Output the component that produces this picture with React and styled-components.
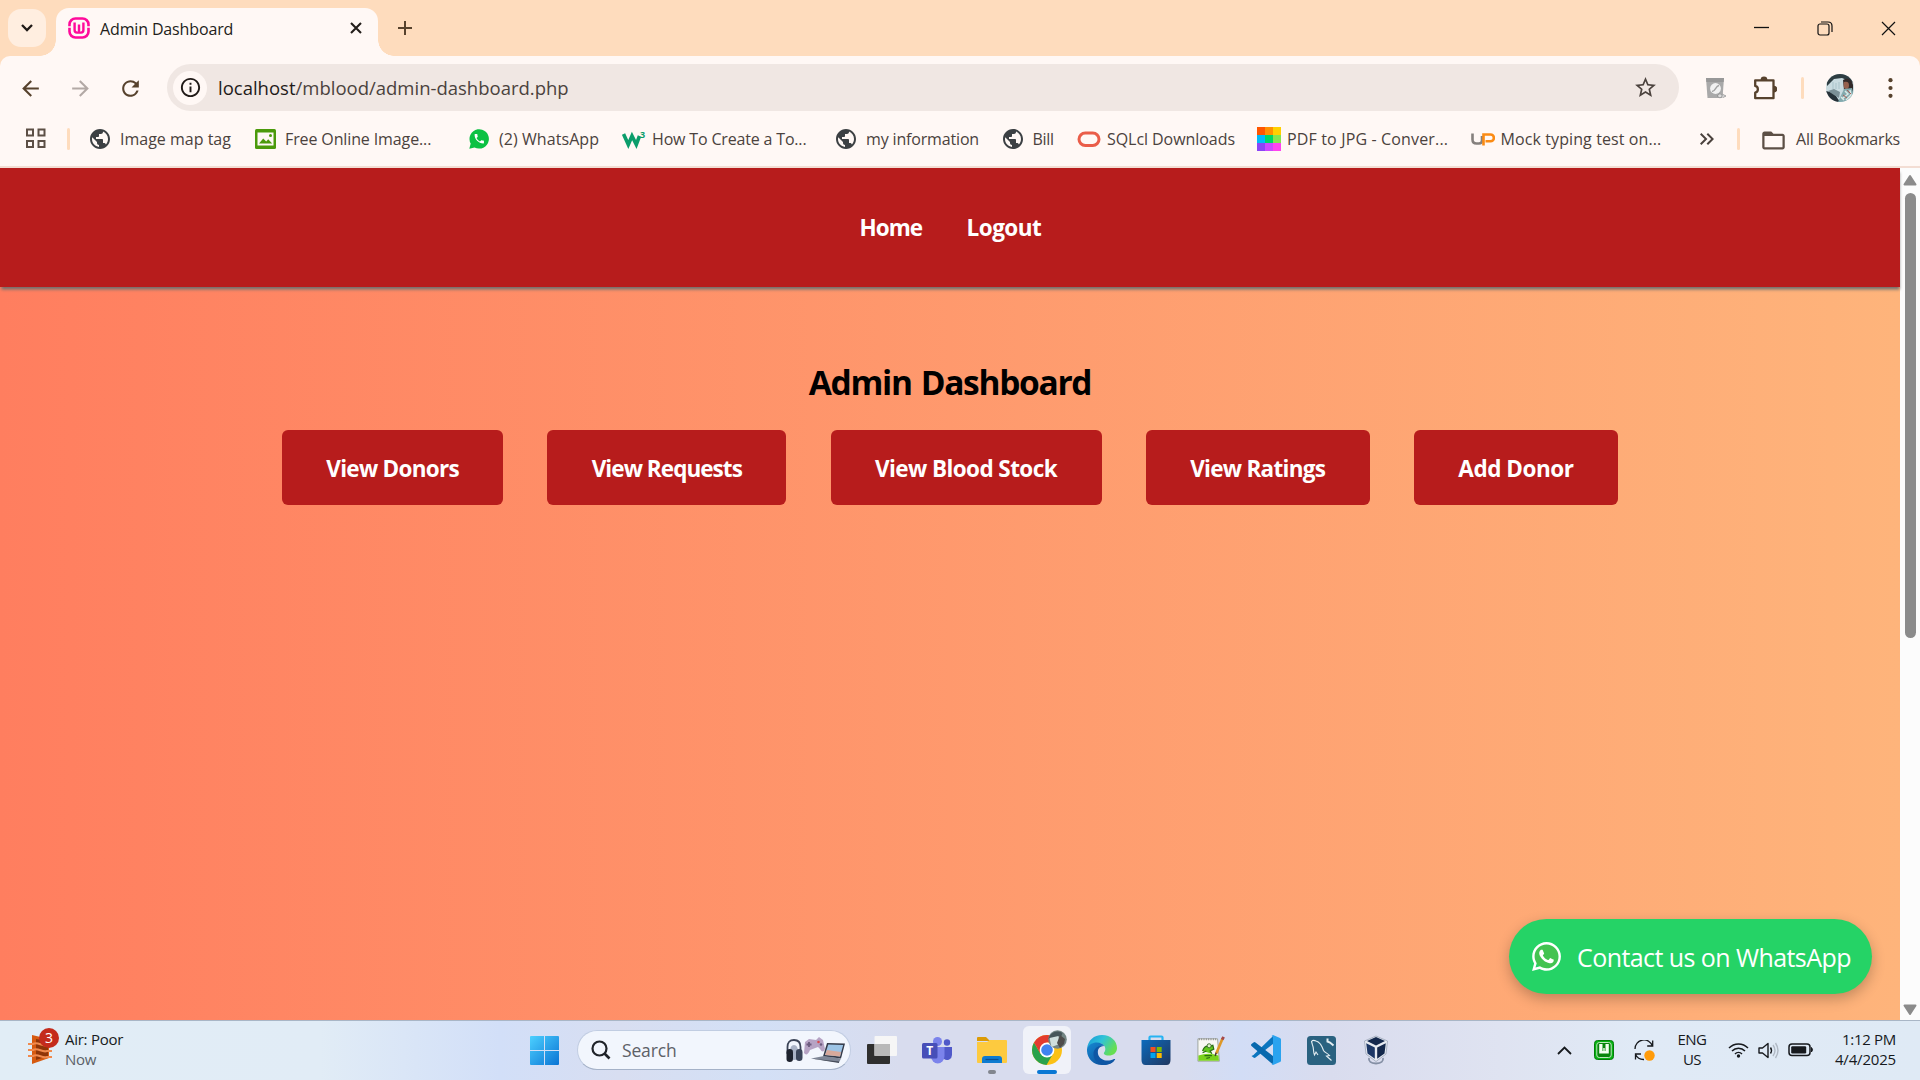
import React from "react";
import styled, { createGlobalStyle, css } from "styled-components";
import {
  MdPublic, MdOutlineInfo, MdArrowBack, MdArrowForward, MdRefresh,
  MdStarOutline, MdFolderOpen, MdKeyboardDoubleArrowRight, MdPhone,
} from "react-icons/md";
import { FaWhatsapp } from "react-icons/fa";

const Global = createGlobalStyle`
  * { box-sizing: border-box; }
  html, body { margin: 0; padding: 0; overflow: hidden; }
  body { font-family: "Open Sans", "Noto Sans", sans-serif; }
  svg { display: block; flex: none; }
`;

const Screen = styled.div`
  width: 1920px;
  height: 1080px;
  display: flex;
  flex-direction: column;
  overflow: hidden;
`;

const Label = styled.span`
  font-size: ${(p) => p.$size || 16}px;
  line-height: 20px;
  letter-spacing: ${(p) => p.$ls || 0}px;
  color: ${(p) => p.$color || "#4b423d"};
  white-space: nowrap;
`;

/* ---------- tab strip ---------- */

const TabStrip = styled.header`
  height: 56px;
  flex: none;
  display: flex;
  background: #fedcbd;
  padding-left: 8px;
`;

const TabSearch = styled.div`
  width: 38px;
  height: 38px;
  margin-top: 9px;
  border-radius: 13px;
  background: #ffeee0;
  display: grid;
  place-items: center;
`;

const flare = css`
  content: "";
  position: absolute;
  bottom: 0;
  width: 16px;
  height: 16px;
`;

const Tab = styled.div`
  position: relative;
  width: 322px;
  height: 48px;
  margin: 8px 0 0 10px;
  padding: 0 16px 9px 12px;
  border-radius: 13px 13px 0 0;
  background: #fff8f5;
  display: flex;
  align-items: center;
  &::before { ${flare} left: -16px; background: radial-gradient(circle at 0 0, transparent 15.5px, #fff8f5 16px); }
  &::after { ${flare} right: -16px; background: radial-gradient(circle at 100% 0, transparent 15.5px, #fff8f5 16px); }
`;

const TabTitle = styled(Label)`
  flex: 1;
  margin: 3px 0 0 10px;
`;

const NewTab = styled.div`
  width: 20px;
  margin: 20px 0 0 19px;
`;

const WindowButtons = styled.div`
  margin-left: auto;
  padding-right: 24px;
  height: 56px;
  display: flex;
  align-items: center;
  gap: 48px;
`;

/* ---------- toolbar ---------- */

const ChromeBack = styled.div`
  background: #fedcbd;
  flex: none;
`;

const Chrome = styled.div`
  height: 112px;
  background: #fff8f5;
  border-radius: 10px 10px 0 0;
  border-bottom: 2px solid #f3ddd3;
`;

const Toolbar = styled.div`
  height: 63px;
  display: flex;
  align-items: center;
  padding: 0 27px 0 18px;
`;

const NavButton = styled.div`
  width: 25px;
  margin-right: 25px;
  padding-top: 1px;
  color: ${(p) => (p.$dim ? "#b3a9a5" : "#57422d")};
`;

const Omnibox = styled.div`
  width: 1512px;
  height: 47px;
  margin-left: -1px;
  border-radius: 24px;
  background: #f0e7e3;
  display: flex;
  align-items: center;
  padding: 0 21px 0 6px;
`;

const InfoDisc = styled.div`
  width: 34px;
  height: 34px;
  border-radius: 50%;
  background: #fff8f5;
  display: grid;
  place-items: center;
  color: #201a17;
`;

const Url = styled(Label)`
  flex: 1;
  margin-left: 11px;
  b { font-weight: 400; color: #1f1b19; }
`;

const Divider = styled.div`
  width: 3px;
  height: 22px;
  border-radius: 2px;
  background: #fedcbd;
`;

const ToolbarEnd = styled.div`
  display: grid;
  grid-template-columns: 48px 48px 25px 62px 5px;
  align-items: center;
  margin-left: auto;
`;

/* ---------- bookmarks ---------- */

const Bookmarks = styled.div`
  height: 43px;
  display: grid;
  grid-template-columns: 40.5px 23.5px 165px 214px 153px 214px 166.5px 74.5px 180px 213.5px 224px 42.5px 23px 1fr;
  align-items: center;
  padding: 0 0 4px 26px;
`;

const Bookmark = styled.div`
  display: flex;
  align-items: center;
  gap: ${(p) => p.$gap || 6}px;
`;

const Glyph = styled.span`
  width: 24px;
  height: 24px;
  flex: none;
  display: grid;
  place-items: center;
  margin: 0 ${(p) => p.$shift || 0}px 0 -${(p) => p.$shift || 0}px;
  color: ${(p) => p.$color || "#3c4043"};
`;

/* ---------- page ---------- */

const Viewport = styled.div`
  flex: 1;
  display: flex;
  min-height: 0;
`;

const Page = styled.main`
  position: relative;
  width: 1900px;
  background: linear-gradient(to right, #ff7e5f, #feb47b);
`;

const Nav = styled.nav`
  height: 119px;
  background: #b71c1c;
  box-shadow: 0 3px 3px -0.5px #6f6f6f;
  display: flex;
  justify-content: center;
  align-items: center;
  gap: 45px;
`;

const NavLink = styled.a`
  width: ${(p) => p.$w}px;
  font-size: 22.5px;
  font-weight: 700;
  line-height: 30px;
  letter-spacing: ${(p) => p.$ls}px;
  color: #fff;
  white-space: nowrap;
`;

const Title = styled.h1`
  margin: 72px 0 24px;
  height: 47px;
  font-size: 33.5px;
  line-height: 47px;
  font-weight: 700;
  letter-spacing: -1.3px;
  word-spacing: 1.500px;
  text-align: center;
  color: #000;
`;

const Actions = styled.div`
  display: flex;
  justify-content: center;
  gap: 44.2px;
`;

const Action = styled.a`
  width: ${(p) => p.$w}px;
  height: 75px;
  border-radius: 6px;
  background: #b71c1c;
  color: #fff;
  font-size: 22.5px;
  font-weight: 700;
  line-height: 78px;
  letter-spacing: ${(p) => p.$ls}px;
  text-align: center;
  white-space: nowrap;
`;

const Contact = styled.a`
  position: absolute;
  right: 28px;
  bottom: 26px;
  width: 363px;
  height: 75px;
  border-radius: 38px;
  background: #25d366;
  box-shadow: 0 5px 14px rgba(0, 0, 0, 0.24);
  display: flex;
  align-items: center;
  padding-left: 21px;
  gap: 14px;
  color: #fff;
`;

const ContactText = styled.span`
  font-size: 25px;
  line-height: 34px;
  letter-spacing: -0.57px;
  white-space: nowrap;
`;

const ScrollTrack = styled.div`
  width: 20px;
  background: #fcfcfc;
  display: flex;
  flex-direction: column;
  align-items: center;
  padding: 6px 0 4px;
`;

const Thumb = styled.div`
  width: 11px;
  height: 445px;
  margin: 7px 0 auto;
  border-radius: 6px;
  background: #8b8b8b;
`;

/* ---------- taskbar ---------- */

const Taskbar = styled.footer`
  height: 60px;
  flex: none;
  display: flex;
  align-items: center;
  padding-bottom: 1px;
  border-top: 1px solid #a9b6c6;
  background: linear-gradient(to right, #e1edf6 0, #e1ecf6 320px, #d2dff8 500px, #d8def1 620px, #d3e0f6 760px,
    #d8dcee 900px, #d8dcee 1180px, #d2ddf6 1240px, #d9dcee 1330px, #dfe3f1 1500px, #e0eaf6 1640px, #dfeaf5 1920px);
`;

const Weather = styled.div`
  position: relative;
  width: 502px;
  height: 58px;
  display: flex;
  padding: 8px 0 0 65px;
`;

const WeatherArt = styled.div`
  position: absolute;
  left: 27px;
  top: 7px;
`;

const Stack = styled.div`
  display: flex;
  flex-direction: column;
  align-items: ${(p) => p.$align || "flex-start"};
  width: ${(p) => p.$w || "auto"};
  padding-bottom: 2px;
`;

const SearchBox = styled.div`
  width: 274px;
  height: 40px;
  margin: 0 7px 0 18px;
  border-radius: 20px;
  border: 1px solid #c1cde2;
  border-bottom-color: #a5b2c8;
  background: #f2f6fd;
  display: flex;
  align-items: center;
  padding: 0 4px 0 13px;
`;

const SearchText = styled(Label)`
  flex: 1;
  margin: -1px 0 0 11px;
`;

const Apps = styled.div`
  display: flex;
  align-items: center;
  gap: 6.9px;
`;

const AppTile = styled.div`
  position: relative;
  width: 48px;
  height: 48px;
  border-radius: 6px;
  display: grid;
  place-items: center;
  background: ${(p) => (p.$active ? "rgba(255,255,255,.62)" : "transparent")};
`;

const Running = styled.i`
  position: absolute;
  left: 50%;
  bottom: 0;
  width: ${(p) => p.$w}px;
  height: 4px;
  border-radius: 2px;
  transform: translateX(-50%);
  background: ${(p) => p.$color};
`;

const Tray = styled.div`
  margin-left: auto;
  display: flex;
  align-items: center;
  padding-right: 24px;
`;

const TraySlot = styled.div`
  width: ${(p) => p.$w}px;
  display: flex;
  justify-content: ${(p) => p.$justify || "flex-start"};
`;

/* ---------- drawings ---------- */

const WampMark = () => (
  <svg width="22" height="22" viewBox="0 0 22 22">
    <rect x="1.5" y="1.5" width="19" height="19" rx="6" fill="#fff8f5" stroke="#ff0a9b" strokeWidth="2.6" />
    <path d="M6.600 5.500v7.500q0 2.600 2.400 2.600h4q2.400 0 2.400-2.600V5.500M11 7.500v8" fill="none" stroke="#ff0a9b" strokeWidth="2.400" />
    <path d="M0 10h3.200M18.800 10H22" stroke="#fff8f5" strokeWidth="1.500" />
  </svg>
);

const Cross = ({ size, color, w }) => (
  <svg width={size} height={size} viewBox={`0 0 ${size} ${size}`}>
    <path d={`M1 1L${size - 1} ${size - 1}M${size - 1} 1L1 ${size - 1}`} stroke={color} strokeWidth={w} />
  </svg>
);

const ReviewExtension = () => (
  <svg width="22" height="24" viewBox="0 0 22 24">
    <path d="M1 2h18l-1.5 20h-15z" fill="#a9a9a9" />
    <path d="M1 2h18l-.3 4H1.300z" fill="#989898" />
    <circle cx="10.500" cy="12.500" r="5.400" fill="#f1f1f1" />
    <path d="M7 15.500c3.500 0 3.500-5.500 7-6" stroke="#a2a2a2" strokeWidth="1.400" fill="none" />
    <path d="M12 20l3-2.500 2.500 2.500-2.500 2zM17 18l4 2-3 1.500" fill="#ddd" stroke="#888" strokeWidth=".7" />
  </svg>
);

const Puzzle = () => (
  <svg width="24" height="24" viewBox="0 0 24 24">
    <path d="M2.200 4.300h18.300v17.900H2.200v-5.500a3.500 3.500 0 0 0 0-6.800z" fill="none" stroke="#57422d" strokeWidth="2.300" strokeLinejoin="round" />
    <path d="M7.600 4a3.400 3.400 0 0 1 6.800 0zM21 9.800a3.300 3.300 0 0 1 0 6.600z" fill="#57422d" />
  </svg>
);

const Avatar = () => (
  <svg width="28" height="28" viewBox="0 0 28 28">
    <clipPath id="avatarClip"><circle cx="14" cy="14" r="14" /></clipPath>
    <g clipPath="url(#avatarClip)">
      <rect width="28" height="28" fill="#c9dbe0" />
      <path d="M0 0h28v9L16 4 8 5 1 12z" fill="#2e3d42" />
      <path d="M0 17l8 2 6 9H0z" fill="#273238" />
      <path d="M2 17l6-2 6 3-1 6-5-3z" fill="#7c9096" />
      <path d="M7 8v7M10 9v6M13 8v7" stroke="#a9c3ca" strokeWidth="1" />
      <path d="M17 6c5-3 9 0 10 5v7l-9-2z" fill="#322a29" />
      <path d="M18 8c3-1 5 0 5 3s-1 4-3 4-3-3-2-7z" fill="#95604d" />
      <path d="M18 15l8-1 2 8-6 6H12z" fill="#83aaae" />
      <path d="M19 17l3 3-5 4M24 16l1 5-5 5M15 23l3 3" stroke="#dbe9e6" strokeWidth="1.500" fill="none" />
      <path d="M21 16l4 4M17 21l4 3" stroke="#a75f57" strokeWidth="1" />
    </g>
  </svg>
);

const Kebab = () => (
  <svg width="5" height="20" viewBox="0 0 5 20">
    {[2.2, 10, 17.8].map((y) => <circle key={y} cx="2.500" cy={y} r="2.100" fill="#57422d" />)}
  </svg>
);

const AppsGrid = () => (
  <svg width="21" height="21" viewBox="0 0 21 21" fill="none" stroke="#5c4f45" strokeWidth="2">
    <rect x="1" y="1.500" width="6" height="6" /><rect x="12.500" y="1.500" width="6" height="6" />
    <rect x="1" y="13" width="6" height="6" /><rect x="12.500" y="13" width="6" height="6" />
  </svg>
);

const PhotoMark = () => (
  <svg width="21" height="20" viewBox="0 0 21 20">
    <rect width="21" height="20" rx="1.500" fill="#4b9a0b" />
    <rect x="2.500" y="3.500" width="16" height="13" fill="#fff8f5" />
    <path d="M4 14.500l4.200-5 3 3 2-2.200 4 4.200z" fill="#4b9a0b" /><circle cx="15.500" cy="6.500" r="1.500" fill="#4b9a0b" />
  </svg>
);

const GreenPhone = () => (
  <svg width="20" height="20" viewBox="0 0 20 20">
    <path d="M.3 19.800l1.400-5.200A9.700 9.700 0 1 1 5.500 18.400z" fill="#0bc143" />
    <svg x="4" y="3.500" width="12.500" height="12.500" viewBox="0 0 24 24"><MdPhone size={24} color="#fff" /></svg>
  </svg>
);

const Schools = () => (
  <svg width="24" height="24" viewBox="0 -3 24 24">
    <path d="M1.500 4l4.800 10.500L10 6l4.300 8.500L17.500 6" fill="none" stroke="#0b9d6b" strokeWidth="3.600" />
    <text x="18" y="7.500" fontSize="9" fontWeight="700" fill="#0b9d6b" fontFamily="Open Sans">3</text>
  </svg>
);

const Oracle = () => (
  <svg width="24" height="18" viewBox="0 0 24 18">
    <rect x="2" y="3" width="20" height="12.500" rx="6.250" fill="none" stroke="#ea5d49" strokeWidth="3" />
  </svg>
);

const ColourTiles = () => {
  const tiles = ["#ff5500", "#ff9000", "#ffd000", "#00baf8", "#00d564", "#84e550", "#8b45f6", "#cb48ff", "#ff43ef"];
  return (
    <svg width="24" height="24" viewBox="0 0 24 24">
      {tiles.map((c, i) => <rect key={c} x={(i % 3) * 8} y={Math.floor(i / 3) * 8} width="8" height="8" fill={c} />)}
    </svg>
  );
};

const UpMark = () => (
  <svg width="24" height="16" viewBox="0 0 24 16" fill="none" strokeWidth="2.600">
    <path d="M1.500 2.500v6q0 4 4 4h2.500q3 0 3-3V5" stroke="#85807d" />
    <path d="M12.500 14.500V3.500h7a3.300 3.300 0 0 1 0 6.800h-5" stroke="#fb8b13" />
  </svg>
);

const Arrow = ({ down }) => (
  <svg width="14" height="12" viewBox="0 0 14 12">
    <path d={down ? "M1.500 1.500h11L7 10z" : "M1.500 10.500h11L7 2z"} fill="#8b8b8b" stroke="#8b8b8b" strokeWidth="2" strokeLinejoin="round" />
  </svg>
);

const LungArt = () => (
  <svg width="34" height="38" viewBox="0 0 34 38">
    <path d="M5 7l17 4v19L5 36z" fill="#d65a10" />
    <path d="M9 11l12 2v15L9 32z" fill="#8f3508" />
    <path d="M1 16h5c5-3 9 3 14 1h5M1 22h5c5-3 9 3 14 1h5M1 28h5c5-3 9 3 14 1h5" stroke="#f08a4e" strokeWidth="2.200" fill="none" />
    <circle cx="22" cy="10" r="10" fill="#c42b1c" />
    <text x="22" y="15" textAnchor="middle" fontSize="14" fill="#fff" fontFamily="Open Sans">3</text>
  </svg>
);

const StartMark = () => (
  <svg width="29" height="29" viewBox="0 0 29 29">
    <defs><linearGradient id="start" x1="0" y1="0" x2="1" y2="1"><stop stopColor="#4cd0ff" /><stop offset="1" stopColor="#0a74d4" /></linearGradient></defs>
    <path d="M0 1q0-1 1-1h13v14H0zM15 0h13q1 0 1 1v13H15zM0 15h14v14H1q-1 0-1-1zM15 15h14v13q0 1-1 1H15z" fill="url(#start)" />
  </svg>
);

const Magnifier = () => (
  <svg width="20" height="20" viewBox="0 0 20 20" fill="none" stroke="#20242a" strokeWidth="2.200">
    <circle cx="8.500" cy="8.500" r="7" /><path d="M13.500 13.500l5 5" strokeWidth="2.600" />
  </svg>
);

const SearchArt = () => (
  <svg width="62" height="26" viewBox="0 0 62 26">
    <path d="M3.500 17V10q0-7 6.500-7t6.500 7v7" fill="none" stroke="#3c4457" strokeWidth="1.800" />
    <path d="M6 15q0-7 4-7t4 7v7q-4 2-8 0z" fill="#aab3c6" />
    <rect x="2.500" y="12" width="6.500" height="13" rx="3.200" fill="#1d222e" /><rect x="12" y="12" width="6.500" height="12" rx="3.200" fill="#3a4459" />
    <path d="M21 5l4-3 7 1 3-3 4 3 2 9q-2 5-5 0l-2-2-8 3q-3 7-6 3z" fill="#b6a3c4" />
    <path d="M25 5v5M22.500 7.500h5" stroke="#6c5b7e" strokeWidth="1.800" /><circle cx="34.500" cy="5" r="1.300" fill="#d8494c" /><circle cx="37" cy="7.500" r="1.300" fill="#6c5b7e" />
    <path d="M43 6l18 .5-4 15-18-2z" fill="#343a48" /><path d="M44.200 7.500l15 .5-3.200 11.500-15-1.500z" fill="#9cc4e6" />
    <path d="M43 13l14 2-1 4.500-15-1.500z" fill="#d7a99b" /><path d="M27 21.500l13-2.500 17 2.500-2 4z" fill="#7f8797" /><path d="M27 21.500l28 3v1.500z" fill="#454b58" />
  </svg>
);

const TaskView = () => (
  <svg width="30" height="28" viewBox="0 0 30 28">
    <rect y="8" width="23" height="20" rx="1" fill="#2f2f2e" />
    <rect x="7.500" y="0" width="22.500" height="20" rx="1" fill="#f6f6f6" /><path d="M7.500 8H23v12H7.500z" fill="#b9b9b9" />
  </svg>
);

const Teams = () => (
  <svg width="30" height="27" viewBox="0 0 30 27">
    <circle cx="15.500" cy="4.500" r="4.500" fill="#7b83eb" /><circle cx="25" cy="5.500" r="3.200" fill="#5059c9" />
    <path d="M20 10h10v8a5 5 0 0 1-8 4z" fill="#5059c9" /><path d="M9 10h13.500v9a6.700 7.500 0 0 1-13.500 0z" fill="#7b83eb" />
    <rect y="6" width="15.500" height="15.500" rx="1.500" fill="#474fb8" />
    <text x="7.800" y="18" textAnchor="middle" fontSize="12" fontWeight="700" fill="#fff" fontFamily="Open Sans">T</text>
  </svg>
);

const Explorer = () => (
  <svg width="30" height="28" viewBox="0 0 30 28">
    <path d="M0 2q0-1 1-1h8l4 4H0z" fill="#dc9b06" />
    <path d="M0 6h10l3-2h16q1 0 1 1v21q0 1-1 1H1q-1 0-1-1z" fill="#fdca3f" />
    <path d="M5 27v-4q0-3 3-3h14q3 0 3 3v4z" fill="#0e7bd0" /><path d="M8.500 23.500h13" stroke="#0b4f92" strokeWidth="1.200" />
  </svg>
);

const ChromeMark = () => (
  <svg width="40" height="40" viewBox="0 0 40 40">
    <circle cx="20" cy="20" r="15" fill="#fbc116" />
    <path d="M7 12.500A15 15 0 0 0 19.500 35L26 23.700 20 20 13.500 23.700z" fill="#29a24c" />
    <path d="M7 12.500A15 15 0 0 1 33 12.500H20L13.500 23.700z" fill="#e33b2e" />
    <circle cx="20" cy="20" r="7.400" fill="#fff" /><circle cx="20" cy="20" r="5.800" fill="#3f83ef" />
    <circle cx="30.500" cy="9.500" r="9.300" fill="#738584" /><path d="M21.500 9a9 9 0 0 1 14-6l-1 3-9 2z" fill="#46565a" />
    <path d="M22.500 8l9-2 1 8-8 3z" fill="#cfdedd" /><path d="M33 5l5 4-1 5-4 4-3-5z" fill="#4e4c4b" />
  </svg>
);

const Edge = () => (
  <svg width="30" height="30" viewBox="0 0 30 30">
    <defs>
      <linearGradient id="edgeTop" x1="0" y1="0" x2="1" y2=".5"><stop stopColor="#1796d8" /><stop offset=".5" stopColor="#30c3d8" /><stop offset="1" stopColor="#66df51" /></linearGradient>
      <linearGradient id="edgeLow" x1="0" y1="0" x2="1" y2="1"><stop stopColor="#1689d2" /><stop offset="1" stopColor="#0c4390" /></linearGradient>
    </defs>
    <path d="M0 14C1 5 7 0 15 0c9 0 15 6 15 13 0 5-4 7.500-8 7.500-5 0-6-2-4.500-3.500C20 13 17 8 11 8 5 8 1 11 0 14z" fill="url(#edgeTop)" />
    <path d="M0 14c1-4 5-6.500 10-6.500 3 0 6 1.500 7.500 3.500-5-1-8 3-7 8 1 6 8 9 15 6.500 1-.3 2-.5 1.500.500C24 29 20 30 15 30 6 30-.5 23 0 14z" fill="url(#edgeLow)" />
    <path d="M17 11c-5 0-7 4-6 8 1.500 6 9 8.500 16 5 .8-.3 1.500 0 1 .8-3 4-8 5.200-11 5.200-7-1-11-6-10.500-12C7 13 12 9.500 17 11z" fill="#0e57a5" />
  </svg>
);

const Store = () => (
  <svg width="30" height="30" viewBox="0 0 30 30">
    <defs><linearGradient id="store" x1="0" y1="0" x2="1" y2="1"><stop stopColor="#0c6bbd" /><stop offset="1" stopColor="#203760" /></linearGradient></defs>
    <path d="M8.500 6V2.500q0-1 1-1h11q1 0 1 1V6" fill="none" stroke="#27b3f2" strokeWidth="2.200" />
    <path d="M.5 5h29v20q0 5-4 5h-21q-4 0-4-5z" fill="url(#store)" />
    <rect x="9.500" y="12" width="5" height="5" fill="#f25022" /><rect x="15.700" y="12" width="5" height="5" fill="#7fba00" />
    <rect x="9.500" y="18" width="5" height="5" fill="#00a4ef" /><rect x="15.700" y="18" width="5" height="5" fill="#ffb900" />
  </svg>
);

const NotepadPlus = () => (
  <svg width="28" height="28" viewBox="0 0 30 28">
    <path d="M1 2h21l2 24H1z" fill="#f8f8f3" stroke="#9aa19a" />
    <path d="M1.500 20q11-4 21.500 0l.5 5.500h-22z" fill="#79d21c" />
    <path d="M2 2.500h20" stroke="#8c8c8c" strokeWidth="2" strokeDasharray="1 1.500" />
    <path d="M6 15q2-6 7-5l4-1 1 4-4 2 2 3M6 17l4-2M8 20h8M10 23l4-1" stroke="#2b6f13" strokeWidth="1.300" fill="#62c81c" />
    <circle cx="13" cy="9.500" r="2.200" fill="#dff3cb" stroke="#3b6a2c" />
    <path d="M27.500 1.500L20.500 18" stroke="#de9828" strokeWidth="2.800" /><path d="M28.500 0l-1.500 3" stroke="#a64a4a" strokeWidth="3" /><path d="M20.500 17l-1 3.500" stroke="#433" strokeWidth="1.500" />
  </svg>
);

const Code = () => (
  <svg width="30" height="30" viewBox="0 0 30 30">
    <path d="M2.500 20L22 1v8L4.500 22.500q-1 .8-2 0L.5 21z" fill="#0a75bf" />
    <path d="M.5 9l2-1.500q1-.8 2 0L22 21v8.500L.5 11q-1-1 0-2z" fill="#0869ae" />
    <path d="M22 0l7 3q1 .5 1 1.500v21q0 1-1 1.500l-7 3-1.500-1q1.500 0 1.500-2V3q0-2-1.500-2z" fill="#2aa3ef" />
  </svg>
);

const MySql = () => (
  <svg width="29" height="29" viewBox="0 0 29 29">
    <rect width="29" height="29" rx="3.500" fill="#2a6280" />
    <path d="M11 19l-2-3-1.500 3C6 16 7 12 5.500 9L4.500 5.500Q6 3.500 9 5c4 1 6 5 7.500 9.500 1 2 4 2.500 6 5l-3 .5 5 4.500" fill="none" stroke="#e3edf1" strokeWidth="1.100" />
    <path d="M20.500 2.500v3l2.500 1 3.500 3" stroke="#e3edf1" strokeWidth="2" fill="none" />
  </svg>
);

const VBox = () => (
  <svg width="26" height="30" viewBox="0 0 26 30">
    <path d="M6 23q-1 5 7 5.500 8-.5 7-5.500" fill="none" stroke="#8590a5" strokeWidth="1.800" />
    <path d="M13 1l11.500 5-1.500 13-10 7.500L3 19 1.500 6z" fill="#e6eaf1" stroke="#9aa4b8" strokeWidth=".8" />
    <path d="M13 2l9 4-9 4.500L4 6z" fill="#13284d" />
    <path d="M3.200 8.200l8.600 4.300v11.300l-7.300-5.300z" fill="#1c3766" />
    <path d="M22.800 8.200l-8.600 4.300v11.300l7.300-5.300z" fill="#14284c" />
  </svg>
);

const WampTray = () => (
  <svg width="20" height="20" viewBox="0 0 20 20">
    <rect x=".5" y=".5" width="19" height="19" rx="3" fill="#07b512" stroke="#067a0c" />
    <rect x="2.800" y="2.500" width="14.400" height="15" rx="2.500" fill="#08860c" stroke="#bfe8c0" />
    <path d="M5.200 4h3.300v7h.8V8h1.400v3h.8V4h3.300v9.500H5.200z" fill="#f3fff2" />
  </svg>
);

const UpdateTray = () => (
  <svg width="21" height="21" viewBox="0 0 21 21" fill="none" stroke="#16191d" strokeWidth="1.300">
    <path d="M1 9A9 9 0 0 1 18.500 6M18.700.5V6h-5.500M1.500 19.500V14H7M1.500 14.500A9 9 0 0 0 10 19.500" />
    <circle cx="15.500" cy="15.500" r="5.200" fill="#ff9b0a" stroke="none" />
  </svg>
);

const Wifi = () => (
  <svg width="21" height="16" viewBox="0 0 21 16" fill="none" stroke="#16191d" strokeWidth="1.500">
    <path d="M1 6a13.200 13.200 0 0 1 19 0M4 9a9 9 0 0 1 13 0M7 12a5 5 0 0 1 7 0" /><circle cx="10.500" cy="14" r="1.700" fill="#16191d" stroke="none" />
  </svg>
);

const Speaker = () => (
  <svg width="21" height="17" viewBox="0 0 21 17" fill="none" stroke="#16191d" strokeWidth="1.400">
    <path d="M1 6h3.500L10 1.500v14L4.500 11H1z" strokeLinejoin="round" /><path d="M12.500 5.500q2 3 0 6" />
    <path d="M15 3q4 5.500 0 11M17.500 1q5 7.500 0 15" stroke="#b0b9c4" />
  </svg>
);

const Battery = () => (
  <svg width="26" height="14" viewBox="0 0 26 14">
    <rect x="1" y="1" width="21" height="11.500" rx="3" fill="none" stroke="#16191d" strokeWidth="1.500" />
    <rect x="3.200" y="3.200" width="15" height="7.200" rx="1.200" fill="#16191d" /><path d="M23.500 4.500q2 2.200 0 4.500z" fill="#16191d" stroke="#16191d" />
  </svg>
);

/* ---------- content ---------- */

const bookmarks = [
  { text: "Image map tag", shift: 2, icon: <MdPublic size={24} /> },
  { text: "Free Online Image...", ls: -0.12, shift: 1.5, icon: <PhotoMark /> },
  { text: "(2) WhatsApp", ls: 0.07, shift: 2, icon: <GreenPhone /> },
  { text: "How To Create a To...", ls: -0.17, icon: <Schools /> },
  { text: "my information", ls: -0.16, shift: 2, icon: <MdPublic size={24} /> },
  { text: "Bill", ls: -0.3, shift: 1.5, icon: <MdPublic size={24} /> },
  { text: "SQLcl Downloads", ls: -0.06, icon: <Oracle /> },
  { text: "PDF to JPG - Conver...", ls: 0.15, icon: <ColourTiles /> },
  { text: "Mock typing test on...", ls: 0.1, icon: <UpMark /> },
];

const actions = [
  { text: "View Donors", w: 221, ls: -0.73 },
  { text: "View Requests", w: 239, ls: -0.94 },
  { text: "View Blood Stock", w: 271, ls: -0.58 },
  { text: "View Ratings", w: 224, ls: -0.72 },
  { text: "Add Donor", w: 204, ls: -0.48 },
];

const apps = [
  { id: "taskview", icon: <TaskView /> },
  { id: "teams", icon: <Teams /> },
  { id: "explorer", icon: <Explorer />, bar: 8, color: "#82868e" },
  { id: "chrome", icon: <ChromeMark />, bar: 20, color: "#0a78d4", active: true },
  { id: "edge", icon: <Edge /> },
  { id: "store", icon: <Store /> },
  { id: "notepad", icon: <NotepadPlus /> },
  { id: "code", icon: <Code /> },
  { id: "mysql", icon: <MySql /> },
  { id: "vbox", icon: <VBox /> },
];

export default function App() {
  return (
    <Screen>
      <Global />
      <TabStrip>
        <TabSearch>
          <svg width="12" height="8" viewBox="0 0 12 8"><path d="M1 1l5 5 5-5" fill="none" stroke="#201a17" strokeWidth="2.300" /></svg>
        </TabSearch>
        <Tab>
          <WampMark />
          <TabTitle $ls={-0.14} $color="#231d1a">Admin Dashboard</TabTitle>
          <Cross size={12} color="#231d1a" w={2.1} />
        </Tab>
        <NewTab>
          <svg width="16" height="16" viewBox="0 0 16 16"><path d="M8 1v14M1 8h14" stroke="#57422d" strokeWidth="2" /></svg>
        </NewTab>
        <WindowButtons>
          <svg width="15" height="14" viewBox="0 0 15 14"><path d="M0 6.500h15" stroke="#111" strokeWidth="1.300" /></svg>
          <svg width="16" height="15" viewBox="0 0 16 15" fill="none" stroke="#111" strokeWidth="1.200"><rect x="1" y="3" width="11" height="11" rx="2" /><path d="M4 1h7q4 0 4 4v6" /></svg>
          <Cross size={15} color="#111" w={1.2} />
        </WindowButtons>
      </TabStrip>

      <ChromeBack>
        <Chrome>
          <Toolbar>
            <NavButton><MdArrowBack size={25} /></NavButton>
            <NavButton $dim><MdArrowForward size={25} /></NavButton>
            <NavButton><MdRefresh size={25} /></NavButton>
            <Omnibox>
              <InfoDisc><MdOutlineInfo size={23} /></InfoDisc>
              <Url $size={18.5} $ls={0}><b>localhost</b>/mblood/admin-dashboard.php</Url>
              <MdStarOutline size={25} color="#4b423d" />
            </Omnibox>
            <ToolbarEnd>
              <ReviewExtension />
              <Puzzle />
              <Divider />
              <Avatar />
              <Kebab />
            </ToolbarEnd>
          </Toolbar>
          <Bookmarks>
            <AppsGrid />
            <Divider />
            {bookmarks.map((b) => (
              <Bookmark key={b.text}>
                <Glyph $shift={b.shift}>{b.icon}</Glyph>
                <Label $ls={b.ls}>{b.text}</Label>
              </Bookmark>
            ))}
            <MdKeyboardDoubleArrowRight size={24} color="#4b423d" />
            <Divider />
            <Bookmark $gap={12}>
              <Glyph $color="#5c4f45"><MdFolderOpen size={27} /></Glyph>
              <Label $ls={-0.2}>All Bookmarks</Label>
            </Bookmark>
          </Bookmarks>
        </Chrome>
      </ChromeBack>

      <Viewport>
        <Page>
          <Nav>
            <NavLink $w={62} $ls={-1}>Home</NavLink>
            <NavLink $w={74} $ls={-0.5}>Logout</NavLink>
          </Nav>
          <Title>Admin Dashboard</Title>
          <Actions>
            {actions.map((a) => <Action key={a.text} $w={a.w} $ls={a.ls}>{a.text}</Action>)}
          </Actions>
          <Contact>
            <svg width="33" height="33" viewBox="0 0 33 33">
              <circle cx="16.500" cy="16.500" r="12" fill="#43c351" />
              <FaWhatsapp size={33} color="#fff" />
            </svg>
            <ContactText>Contact us on WhatsApp</ContactText>
          </Contact>
        </Page>
        <ScrollTrack>
          <Arrow />
          <Thumb />
          <Arrow down />
        </ScrollTrack>
      </Viewport>

      <Taskbar>
        <Weather>
          <WeatherArt><LungArt /></WeatherArt>
          <Stack>
            <Label $size={15} $ls={-0.27} $color="#171b20">Air: Poor</Label>
            <Label $size={15} $ls={-0.31} $color="#5b6168">Now</Label>
          </Stack>
        </Weather>
        <TraySlot $w={57} $justify="flex-end"><StartMark /></TraySlot>
        <SearchBox>
          <Magnifier />
          <SearchText $size={17.5} $ls={-0.15} $color="#5d6167">Search</SearchText>
          <SearchArt />
        </SearchBox>
        <Apps>
          {apps.map((a) => (
            <AppTile key={a.id} $active={a.active}>
              {a.icon}
              {a.bar && <Running $w={a.bar} $color={a.color} />}
            </AppTile>
          ))}
        </Apps>
        <Tray>
          <TraySlot $w={37}>
            <svg width="15" height="9" viewBox="0 0 15 9"><path d="M1 8l6.500-6.500L14 8" fill="none" stroke="#16191d" strokeWidth="1.800" /></svg>
          </TraySlot>
          <TraySlot $w={40}><WampTray /></TraySlot>
          <TraySlot $w={37}><UpdateTray /></TraySlot>
          <Stack $align="center" $w="42px">
            <Label $size={15} $ls={-0.5} $color="#16191d">ENG</Label>
            <Label $size={15} $ls={-0.5} $color="#16191d">US</Label>
          </Stack>
          <TraySlot $w={15} />
          <TraySlot $w={30}><Wifi /></TraySlot>
          <TraySlot $w={30}><Speaker /></TraySlot>
          <TraySlot $w={41}><Battery /></TraySlot>
          <Stack $align="flex-end" $w="67px">
            <Label $size={15} $ls={-0.3} $color="#16191d">1:12 PM</Label>
            <Label $size={15} $ls={-0.18} $color="#16191d">4/4/2025</Label>
          </Stack>
        </Tray>
      </Taskbar>
    </Screen>
  );
}
